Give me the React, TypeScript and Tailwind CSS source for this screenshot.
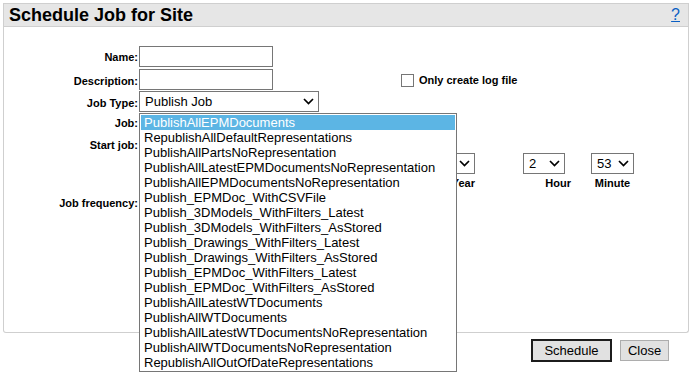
import React from "react";

const jobs = [
  "PublishAllEPMDocuments",
  "RepublishAllDefaultRepresentations",
  "PublishAllPartsNoRepresentation",
  "PublishAllLatestEPMDocumentsNoRepresentation",
  "PublishAllEPMDocumentsNoRepresentation",
  "Publish_EPMDoc_WithCSVFile",
  "Publish_3DModels_WithFilters_Latest",
  "Publish_3DModels_WithFilters_AsStored",
  "Publish_Drawings_WithFilters_Latest",
  "Publish_Drawings_WithFilters_AsStored",
  "Publish_EPMDoc_WithFilters_Latest",
  "Publish_EPMDoc_WithFilters_AsStored",
  "PublishAllLatestWTDocuments",
  "PublishAllWTDocuments",
  "PublishAllLatestWTDocumentsNoRepresentation",
  "PublishAllWTDocumentsNoRepresentation",
  "RepublishAllOutOfDateRepresentations",
];

const Chevron = () => (
  <svg width="11" height="7" viewBox="0 0 11 7" className="shrink-0">
    <path d="M1 1l4.5 4.5L10 1" fill="none" stroke="#000" strokeWidth="1.7" />
  </svg>
);

interface SelectProps {
  value: string;
  className: string;
}

const FakeSelect = ({ value, className }: SelectProps) => (
  <div
    className={`flex items-center justify-between border border-[#767676] bg-white pl-[4px] pr-[4px] text-[13px] leading-none ${className}`}
  >
    <span>{value}</span>
    <Chevron />
  </div>
);

interface RowProps {
  label: string;
  className?: string;
  labelClass?: string;
  children?: React.ReactNode;
}

const Row = ({ label, className = "", labelClass = "", children }: RowProps) => (
  <div className={`flex ${className}`}>
    <div
      className={`w-[135px] shrink-0 pr-[1px] text-right text-[11px] font-bold leading-[13px] ${labelClass}`}
    >
      {label}
    </div>
    {children}
  </div>
);

const DateField = ({
  value,
  label,
  colClass,
  selectClass,
  labelClass,
}: {
  value: string;
  label: string;
  colClass: string;
  selectClass: string;
  labelClass: string;
}) => (
  <div className={`flex flex-col ${colClass}`}>
    <FakeSelect value={value} className={`h-[21px] ${selectClass}`} />
    <span className={`mt-[3px] text-[11px] font-bold leading-[13px] ${labelClass}`}>
      {label}
    </span>
  </div>
);

export default function App() {
  return (
    <div className="relative h-[374px] w-[692px] overflow-hidden bg-white px-[3px] pt-[3px] font-['Liberation_Sans',Arial,sans-serif] text-black">
      {/* header */}
      <div className="flex h-[24px] items-center justify-between border border-[#cfcfcf] bg-[#e6e6e6] pl-[5px] pr-[8px]">
        <h1 className="text-[18px] font-bold leading-[22px]">Schedule Job for Site</h1>
        <a className="text-[16px] leading-[22px] text-[#0a5fc4] underline">?</a>
      </div>

      {/* form panel */}
      <div className="h-[306px] rounded-b-[3px] border-x border-b border-[#cfcfcf] pt-[19px]">
        <div className="flex flex-col">
          <Row label="Name:" className="h-[23px] items-start" labelClass="pt-[5px]">
            <div className="h-[21px] w-[134px] border border-[#767676] bg-white" />
          </Row>
          <Row label="Description:" className="h-[22px] items-start" labelClass="pt-[6px]">
            <div className="h-[21px] w-[134px] border border-[#767676] bg-white" />
            <div className="ml-[128px] mt-[5px] flex items-center gap-[5px]">
              <div className="h-[13px] w-[13px] border border-[#767676] bg-white" />
              <span className="text-[11px] font-bold leading-[13px]">Only create log file</span>
            </div>
          </Row>
          <Row label="Job Type:" className="h-[21px] items-start" labelClass="pt-[6px]">
            <FakeSelect value="Publish Job" className="h-[21px] w-[180px] pl-[5px] pr-[4px]" />
          </Row>
          <Row label="Job:" className="h-[22px] items-start" labelClass="pt-[5px]" />
          <Row label="Start job:" className="items-start" labelClass="pt-[5px]">
            <div className="flex pt-[19px]">
              <div className="w-[275px]" />
              <DateField value="" label="Year" colClass="w-[61px] items-end" selectClass="w-[60px]" labelClass="" />
              <DateField value="2" label="Hour" colClass="ml-[48px] w-[48px] items-start" selectClass="w-[42px] pl-[5px]" labelClass="self-end" />
              <DateField value="53" label="Minute" colClass="ml-[20px] w-[43px] items-center" selectClass="w-[43px] pl-[5px]" labelClass="" />
            </div>
          </Row>
          <Row label="Job frequency:" className="mt-[7px] items-start" />
        </div>
      </div>

      {/* buttons */}
      <div className="flex items-center justify-end gap-[8px] pr-[20px] pt-[6px]">
        <button className="h-[23px] w-[81px] border-2 border-[#1c1c1c] bg-[#e1e1e1] text-[13px] leading-none">
          Schedule
        </button>
        <button className="h-[21px] w-[49px] border border-[#adadad] bg-[#e1e1e1] text-[13px] leading-none">
          Close
        </button>
      </div>

      {/* open job list */}
      <div className="absolute left-[139px] top-[113px] w-[318px] border border-[#767676] bg-white p-[1px]">
        {jobs.map((job, i) => (
          <div
            key={job}
            className={`h-[15px] whitespace-nowrap px-[3px] text-[13px] leading-[15px] ${
              i === 0 ? "bg-[#5cb5e4] text-white" : "text-black"
            }`}
          >
            {job}
          </div>
        ))}
      </div>
    </div>
  );
}
